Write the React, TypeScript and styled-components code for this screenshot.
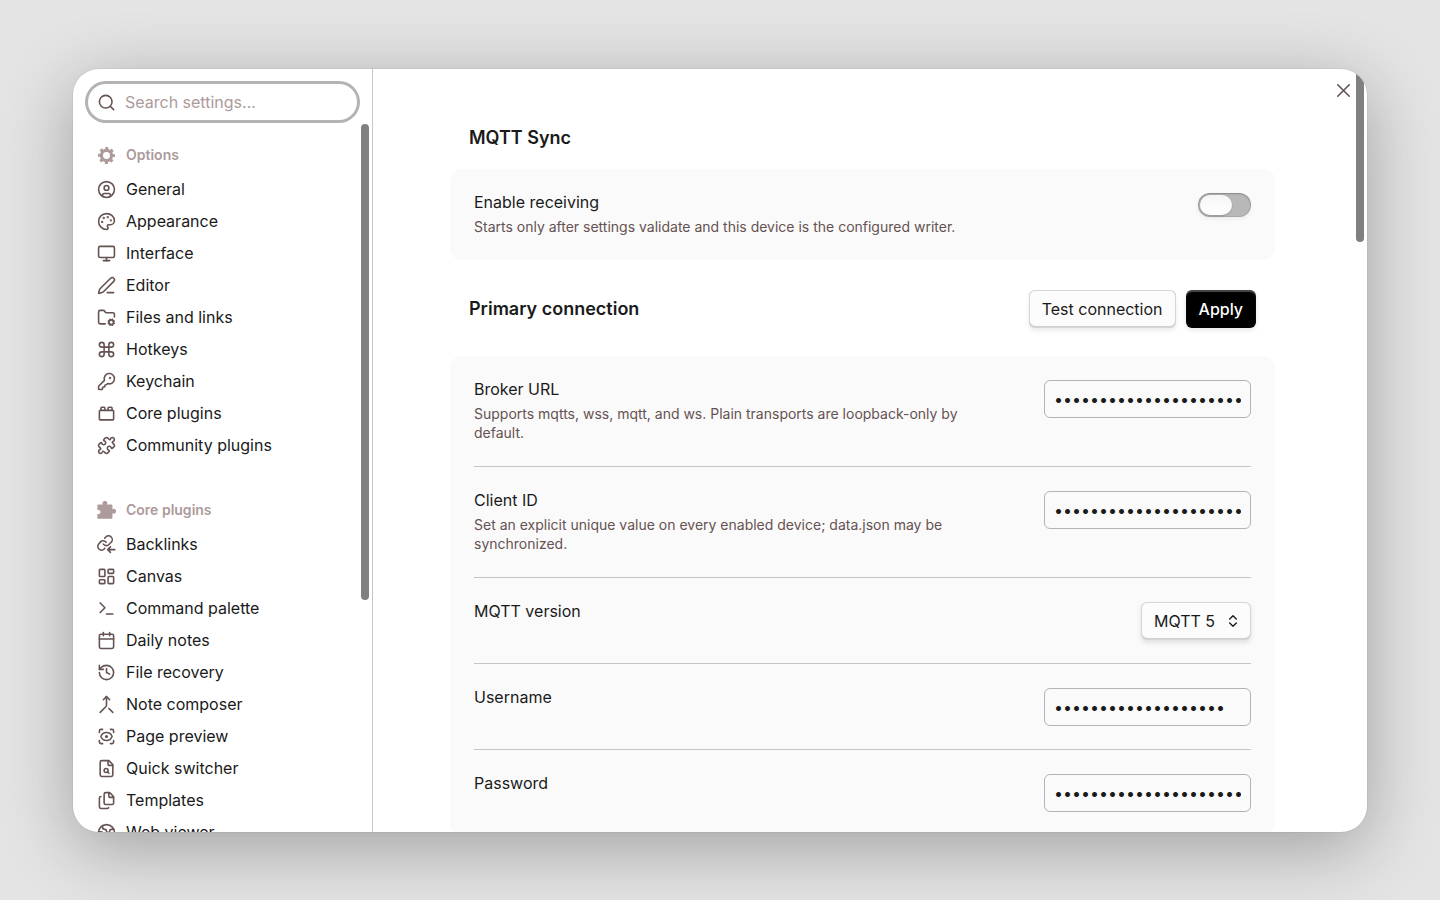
import React, { useState } from "react";
import styled, { createGlobalStyle } from "styled-components";
import {
  Calendar,
  ChevronsUpDown,
  CircleUser,
  Command,
  Earth,
  Files,
  FileSearch,
  FolderCog,
  History,
  KeyRound,
  LayoutDashboard,
  Merge,
  Monitor,
  Palette,
  PenLine,
  Puzzle,
  ScanEye,
  Search,
  Terminal,
  ToyBrick,
  X,
} from "lucide-react";

const GlobalStyle = createGlobalStyle`
  *, *::before, *::after { box-sizing: border-box; }
  body {
    margin: 0;
    background: #e4e4e4;
    color: #1a1a1a;
    font-family: Inter, "Liberation Sans", sans-serif;
    font-size: 16px;
    line-height: 24px;
  }
  button, input, select { font: inherit; color: inherit; }
`;

const Page = styled.div`
  height: 100vh;
  padding: 69px 73px 68px;
  overflow: hidden;
`;

const Modal = styled.div`
  position: relative;
  display: grid;
  grid-template-columns: 300px minmax(0, 1fr);
  height: 100%;
  overflow: hidden;
  background: #fff;
  border-radius: 26px;
  box-shadow: 0 0 0 1px rgba(0, 0, 0, 0.04), 0 16px 70px rgba(0, 0, 0, 0.3);
`;

const Sidebar = styled.aside`
  display: flex;
  flex-direction: column;
  min-height: 0;
  border-right: 1px solid #c6c6c6;
`;

const SearchBox = styled.label`
  display: flex;
  align-items: center;
  gap: 9px;
  flex: none;
  height: 36px;
  margin: 15px 15px 4px;
  padding: 0 9px;
  border-radius: 18px;
  background: #fff;
  box-shadow: 0 0 0 3px #b3b3b3;
  color: #655252;
`;

const SearchInput = styled.input`
  flex: 1;
  min-width: 0;
  padding: 0;
  border: 0;
  outline: 0;
  background: none;
  &::placeholder { color: #ad9a9a; opacity: 1; }
`;

const NavScroll = styled.div`
  display: flex;
  flex: 1;
  min-height: 0;
  justify-content: space-between;
  overflow: hidden;
`;

const Nav = styled.nav`
  flex: 1;
  padding: 15px 8px 0 24px;
`;

const Thumb = styled.div<{ $length: number }>`
  flex: none;
  width: 8px;
  height: ${(p) => p.$length}px;
  margin-right: 3px;
  border-radius: 4px;
  background: #808080;
`;

const NavGroup = styled.section`
  margin-bottom: 33px;
`;

const NavTitle = styled.h2`
  display: flex;
  align-items: center;
  gap: 10px;
  height: 32px;
  margin: 0 0 2px;
  color: #ad9a9a;
  font-size: 14px;
  font-weight: 600;
  svg { width: 19px; height: 19px; }
`;

const NavItem = styled.a`
  display: flex;
  align-items: center;
  gap: 10px;
  height: 32px;
  color: #1a1a1a;
  text-decoration: none;
  svg { flex: none; width: 19px; height: 19px; color: #655252; stroke-width: 2px; }
`;

const Main = styled.main`
  display: flex;
  min-width: 0;
  min-height: 0;
  overflow: hidden;
`;

const Content = styled.div`
  flex: 1;
  min-width: 0;
  padding: 50px 81px 0 77px;
`;

const CloseButton = styled.button`
  position: absolute;
  top: 10px;
  right: 12px;
  display: grid;
  place-items: center;
  width: 23px;
  height: 23px;
  padding: 0;
  border: 0;
  background: none;
  color: #655252;
`;

const Heading = styled.header<{ $spaced?: boolean }>`
  display: flex;
  align-items: center;
  justify-content: space-between;
  height: 38px;
  margin: ${(p) => (p.$spaced ? "30px 19px 28px" : "0 19px 12px")};
`;

const HeadingText = styled.h1`
  margin: 0;
  font-size: 18px;
  font-weight: 600;
`;

const Actions = styled.div`
  display: flex;
  gap: 10px;
`;

const Button = styled.button<{ $primary?: boolean }>`
  height: 38px;
  padding: 0 13px;
  border: 0;
  border-radius: 6px;
  font-weight: ${(p) => (p.$primary ? 500 : 400)};
  color: ${(p) => (p.$primary ? "#fff" : "#1a1a1a")};
  background: ${(p) => (p.$primary ? "#000" : "#fcfcfc")};
  box-shadow: ${(p) =>
    p.$primary
      ? "inset 0 2px 1px rgba(255,255,255,.28), 0 2px 5px rgba(0,0,0,.1)"
      : "inset 0 0 0 1px #d6d6d6, inset 0 -1px 0 1px #cecece, 0 3px 5px rgba(0,0,0,.08)"};
`;

const Card = styled.div`
  padding: 0 24px;
  border-radius: 12px;
  background: #fafafa;
`;

const Row = styled.div`
  display: flex;
  justify-content: space-between;
  gap: 64px;
  padding: 24px 0 23px;
  & + & { border-top: 1px solid #c6c6c6; }
`;

const Info = styled.div`
  min-width: 0;
`;

const Name = styled.label`
  display: block;
  line-height: 19px;
`;

const Description = styled.p`
  margin: 5px 0 1px;
  color: #655252;
  font-size: 14px;
  line-height: 19px;
`;

const Secret = styled.input`
  flex: none;
  width: 207px;
  height: 38px;
  padding: 0 9px;
  border: 1px solid #b3b3b3;
  border-radius: 6px;
  outline: 0;
  background: #fafafa;
`;

const SelectWrap = styled.div`
  position: relative;
  flex: none;
  height: 38px;
  svg { position: absolute; right: 10px; top: 11px; pointer-events: none; }
`;

const Select = styled.select`
  appearance: none;
  width: 110px;
  height: 38px;
  padding: 0 34px 0 13px;
  border: 0;
  border-radius: 6px;
  background: #fcfcfc;
  box-shadow: inset 0 0 0 1px #d6d6d6, inset 0 -1px 0 1px #cecece, 0 3px 5px rgba(0, 0, 0, 0.1);
`;

const Toggle = styled.input`
  appearance: none;
  flex: none;
  width: 53px;
  height: 24px;
  margin: 0;
  padding: 2px;
  border-radius: 12px;
  background: ${(p) => (p.checked ? "#000" : "#b8b8b8")};
  box-shadow: inset 0 1px 2px rgba(0, 0, 0, 0.2), inset 0 0 0 1px rgba(0, 0, 0, 0.08), 0 2px 4px rgba(0, 0, 0, 0.06);
  &::before {
    content: "";
    display: block;
    width: 32px;
    height: 20px;
    margin-left: ${(p) => (p.checked ? "17px" : "0")};
    border-radius: 10px;
    background: linear-gradient(#f6f6f6, #fff);
    box-shadow: 0 1px 2px rgba(0, 0, 0, 0.2);
  }
`;

const GearIcon = () => (
  <svg viewBox="0 0 24 24" fill="none" stroke="currentColor" aria-hidden="true">
    <circle cx="12" cy="12" r="6.4" strokeWidth="4" />
    <circle cx="12" cy="12" r="9" strokeWidth="3.4" strokeDasharray="3.8 3.2686" strokeDashoffset="1.9" />
  </svg>
);

const PuzzleFilledIcon = () => (
  <svg viewBox="0 0 24 24" fill="currentColor" aria-hidden="true">
    <path d="M2 4.5h5.5a3 3 0 1 1 5 0H18A1.5 1.5 0 0 1 19.500 6v4.500a3 3 0 1 1 0 5V21a1.500 1.500 0 0 1-1.500 1.500H2A1.500 1.500 0 0 1 .5 21v-4.500H2a2.500 2.500 0 1 0 0-5H.5V6A1.500 1.500 0 0 1 2 4.500z" />
  </svg>
);

const BacklinkIcon = () => (
  <svg
    viewBox="0 0 24 24"
    fill="none"
    stroke="currentColor"
    strokeWidth="2"
    strokeLinecap="round"
    strokeLinejoin="round"
    aria-hidden="true"
  >
    <path d="M8 11.5a4.7 4.7 0 0 0 7.1.5l2.8-2.8a4.7 4.7 0 0 0-6.7-6.7L9.7 4" />
    <path d="M11.5 9.2a4.7 4.7 0 0 0-7.1-.5l-2 2.3a4.7 4.7 0 0 0 6.7 6.7l.8-.9" />
    <path d="M22.5 18.5h-8.5M17 15l-3.5 3.5L17 22" />
  </svg>
);

const options = [
  ["General", CircleUser],
  ["Appearance", Palette],
  ["Interface", Monitor],
  ["Editor", PenLine],
  ["Files and links", FolderCog],
  ["Hotkeys", Command],
  ["Keychain", KeyRound],
  ["Core plugins", ToyBrick],
  ["Community plugins", Puzzle],
] as const;

const corePlugins = [
  ["Backlinks", BacklinkIcon],
  ["Canvas", LayoutDashboard],
  ["Command palette", Terminal],
  ["Daily notes", Calendar],
  ["File recovery", History],
  ["Note composer", Merge],
  ["Page preview", ScanEye],
  ["Quick switcher", FileSearch],
  ["Templates", Files],
  ["Web viewer", Earth],
] as const;

export default function App() {
  const [receiving, setReceiving] = useState(false);
  return (
    <>
      <GlobalStyle />
      <Page>
        <Modal role="dialog" aria-label="Settings">
          <Sidebar>
            <SearchBox>
              <Search size={19} />
              <SearchInput type="search" placeholder="Search settings..." aria-label="Search settings" />
            </SearchBox>
            <NavScroll>
              <Nav>
                <NavGroup>
                  <NavTitle><GearIcon />Options</NavTitle>
                  {options.map(([label, Icon]) => (
                    <NavItem href="#" key={label}><Icon />{label}</NavItem>
                  ))}
                </NavGroup>
                <NavGroup>
                  <NavTitle><PuzzleFilledIcon />Core plugins</NavTitle>
                  {corePlugins.map(([label, Icon]) => (
                    <NavItem href="#" key={label}><Icon />{label}</NavItem>
                  ))}
                </NavGroup>
              </Nav>
              <Thumb $length={476} />
            </NavScroll>
          </Sidebar>
          <Main>
            <Content>
              <Heading><HeadingText>MQTT Sync</HeadingText></Heading>
              <Card>
                <Row>
                  <Info>
                    <Name htmlFor="receiving">Enable receiving</Name>
                    <Description>Starts only after settings validate and this device is the configured writer.</Description>
                  </Info>
                  <Toggle
                    id="receiving"
                    type="checkbox"
                    role="switch"
                    checked={receiving}
                    onChange={(e) => setReceiving(e.target.checked)}
                  />
                </Row>
              </Card>
              <Heading $spaced>
                <HeadingText as="h2">Primary connection</HeadingText>
                <Actions>
                  <Button type="button">Test connection</Button>
                  <Button type="button" $primary>Apply</Button>
                </Actions>
              </Heading>
              <Card>
                <Row>
                  <Info>
                    <Name htmlFor="broker">Broker URL</Name>
                    <Description>Supports mqtts, wss, mqtt, and ws. Plain transports are loopback-only by default.</Description>
                  </Info>
                  <Secret id="broker" type="password" defaultValue={"x".repeat(21)} />
                </Row>
                <Row>
                  <Info>
                    <Name htmlFor="client">Client ID</Name>
                    <Description>Set an explicit unique value on every enabled device; data.json may be synchronized.</Description>
                  </Info>
                  <Secret id="client" type="password" defaultValue={"x".repeat(21)} />
                </Row>
                <Row>
                  <Info><Name htmlFor="version">MQTT version</Name></Info>
                  <SelectWrap>
                    <Select id="version" defaultValue="5">
                      <option value="5">MQTT 5</option>
                      <option value="3">MQTT 3.1.1</option>
                    </Select>
                    <ChevronsUpDown size={16} />
                  </SelectWrap>
                </Row>
                <Row>
                  <Info><Name htmlFor="username">Username</Name></Info>
                  <Secret id="username" type="password" defaultValue={"x".repeat(19)} />
                </Row>
                <Row>
                  <Info><Name htmlFor="password">Password</Name></Info>
                  <Secret id="password" type="password" defaultValue={"x".repeat(21)} />
                </Row>
              </Card>
            </Content>
            <Thumb $length={173} />
          </Main>
          <CloseButton type="button" aria-label="Close"><X size={23} strokeWidth={1.6} /></CloseButton>
        </Modal>
      </Page>
    </>
  );
}
